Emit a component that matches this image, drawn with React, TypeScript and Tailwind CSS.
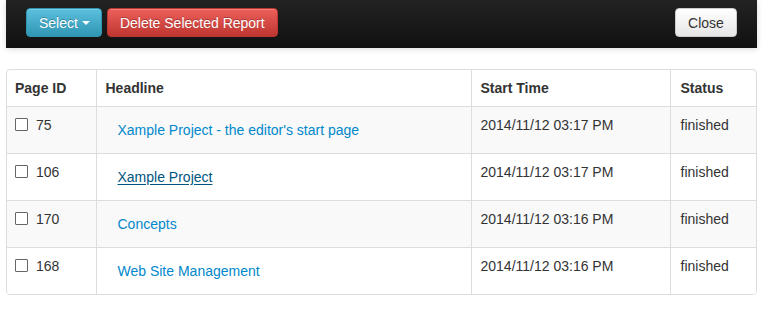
import React from "react";

const rows = [
  { id: "75", title: "Xample Project - the editor's start page", time: "2014/11/12 03:17 PM", hover: false },
  { id: "106", title: "Xample Project", time: "2014/11/12 03:17 PM", hover: true },
  { id: "170", title: "Concepts", time: "2014/11/12 03:16 PM", hover: false },
  { id: "168", title: "Web Site Management", time: "2014/11/12 03:16 PM", hover: false },
];

export default function App() {
  return (
    <div className="w-[764px] h-[309px] bg-white text-[14px] leading-[20px] text-[#333]" style={{ fontFamily: '"Liberation Sans", Arial, sans-serif' }}>
      <div className="ml-[6px] w-[751px]">
        <div className="h-[48px] flex items-start pt-[8px] px-[20px] bg-[linear-gradient(to_bottom,#222,#111)] shadow-[0_1px_6px_rgba(0,0,0,0.15)]">
          <button className="h-[29px] pl-[12px] pr-[11px] flex items-center gap-[4px] rounded-[4px] text-white border border-[#2f96b4] bg-[linear-gradient(to_bottom,#5bc0de,#2f96b4)] [text-shadow:0_-1px_0_rgba(0,0,0,0.25)] shadow-[inset_0_1px_0_rgba(255,255,255,0.2)]">
            Select
            <span className="w-0 h-0 border-l-[4px] border-r-[4px] border-t-[4px] border-l-transparent border-r-transparent border-t-white mt-[1px]" />
          </button>
          <button className="ml-[5px] h-[29px] px-[12px] rounded-[4px] text-white border border-[#bd362f] bg-[linear-gradient(to_bottom,#ee5f5b,#bd362f)] [text-shadow:0_-1px_0_rgba(0,0,0,0.25)] shadow-[inset_0_1px_0_rgba(255,255,255,0.2)]">
            Delete Selected Report
          </button>
          <div className="flex-1" />
          <button className="h-[29px] w-[62px] rounded-[4px] text-[#333] border border-[#ccc] bg-[linear-gradient(to_bottom,#fff,#e6e6e6)] shadow-[inset_0_1px_0_rgba(255,255,255,0.2)]">
            Close
          </button>
        </div>

        <div className="mt-[21px] w-[751px] border border-[#ddd] rounded-[4px] overflow-hidden">
          <table className="w-full border-collapse table-fixed">
            <colgroup>
              <col className="w-[89px]" />
              <col className="w-[375px]" />
              <col className="w-[199px]" />
              <col />
            </colgroup>
            <thead>
              <tr className="h-[36px]">
                <th className="text-left font-bold px-[8px] align-middle">Page ID</th>
                <th className="text-left font-bold px-[9px] border-l border-[#ddd] align-middle">Headline</th>
                <th className="text-left font-bold px-[9px] border-l border-[#ddd] align-middle">Start Time</th>
                <th className="text-left font-bold px-[10px] border-l border-[#ddd] align-middle">Status</th>
              </tr>
            </thead>
            <tbody>
              {rows.map((r, i) => (
                <tr key={r.id} className={`h-[47px] border-t border-[#ddd] ${i % 2 === 0 ? "bg-[#f9f9f9]" : "bg-white"}`}>
                  <td className="px-[8px] pt-[8px] align-top">
                    <div className="flex items-center">
                      <span className="w-[13px] h-[13px] border border-[#666] bg-white rounded-[1px] mr-[8px]" />
                      <span>{r.id}</span>
                    </div>
                  </td>
                  <td className="border-l border-[#ddd] align-top pt-[13px] pl-[21px]">
                    <a className={r.hover ? "text-[#005580] underline underline-offset-[2px]" : "text-[#0088cc]"} href="#">
                      {r.title}
                    </a>
                  </td>
                  <td className="border-l border-[#ddd] align-top pt-[8px] px-[9px]">{r.time}</td>
                  <td className="border-l border-[#ddd] align-top pt-[8px] px-[10px]">finished</td>
                </tr>
              ))}
            </tbody>
          </table>
        </div>
      </div>
    </div>
  );
}
